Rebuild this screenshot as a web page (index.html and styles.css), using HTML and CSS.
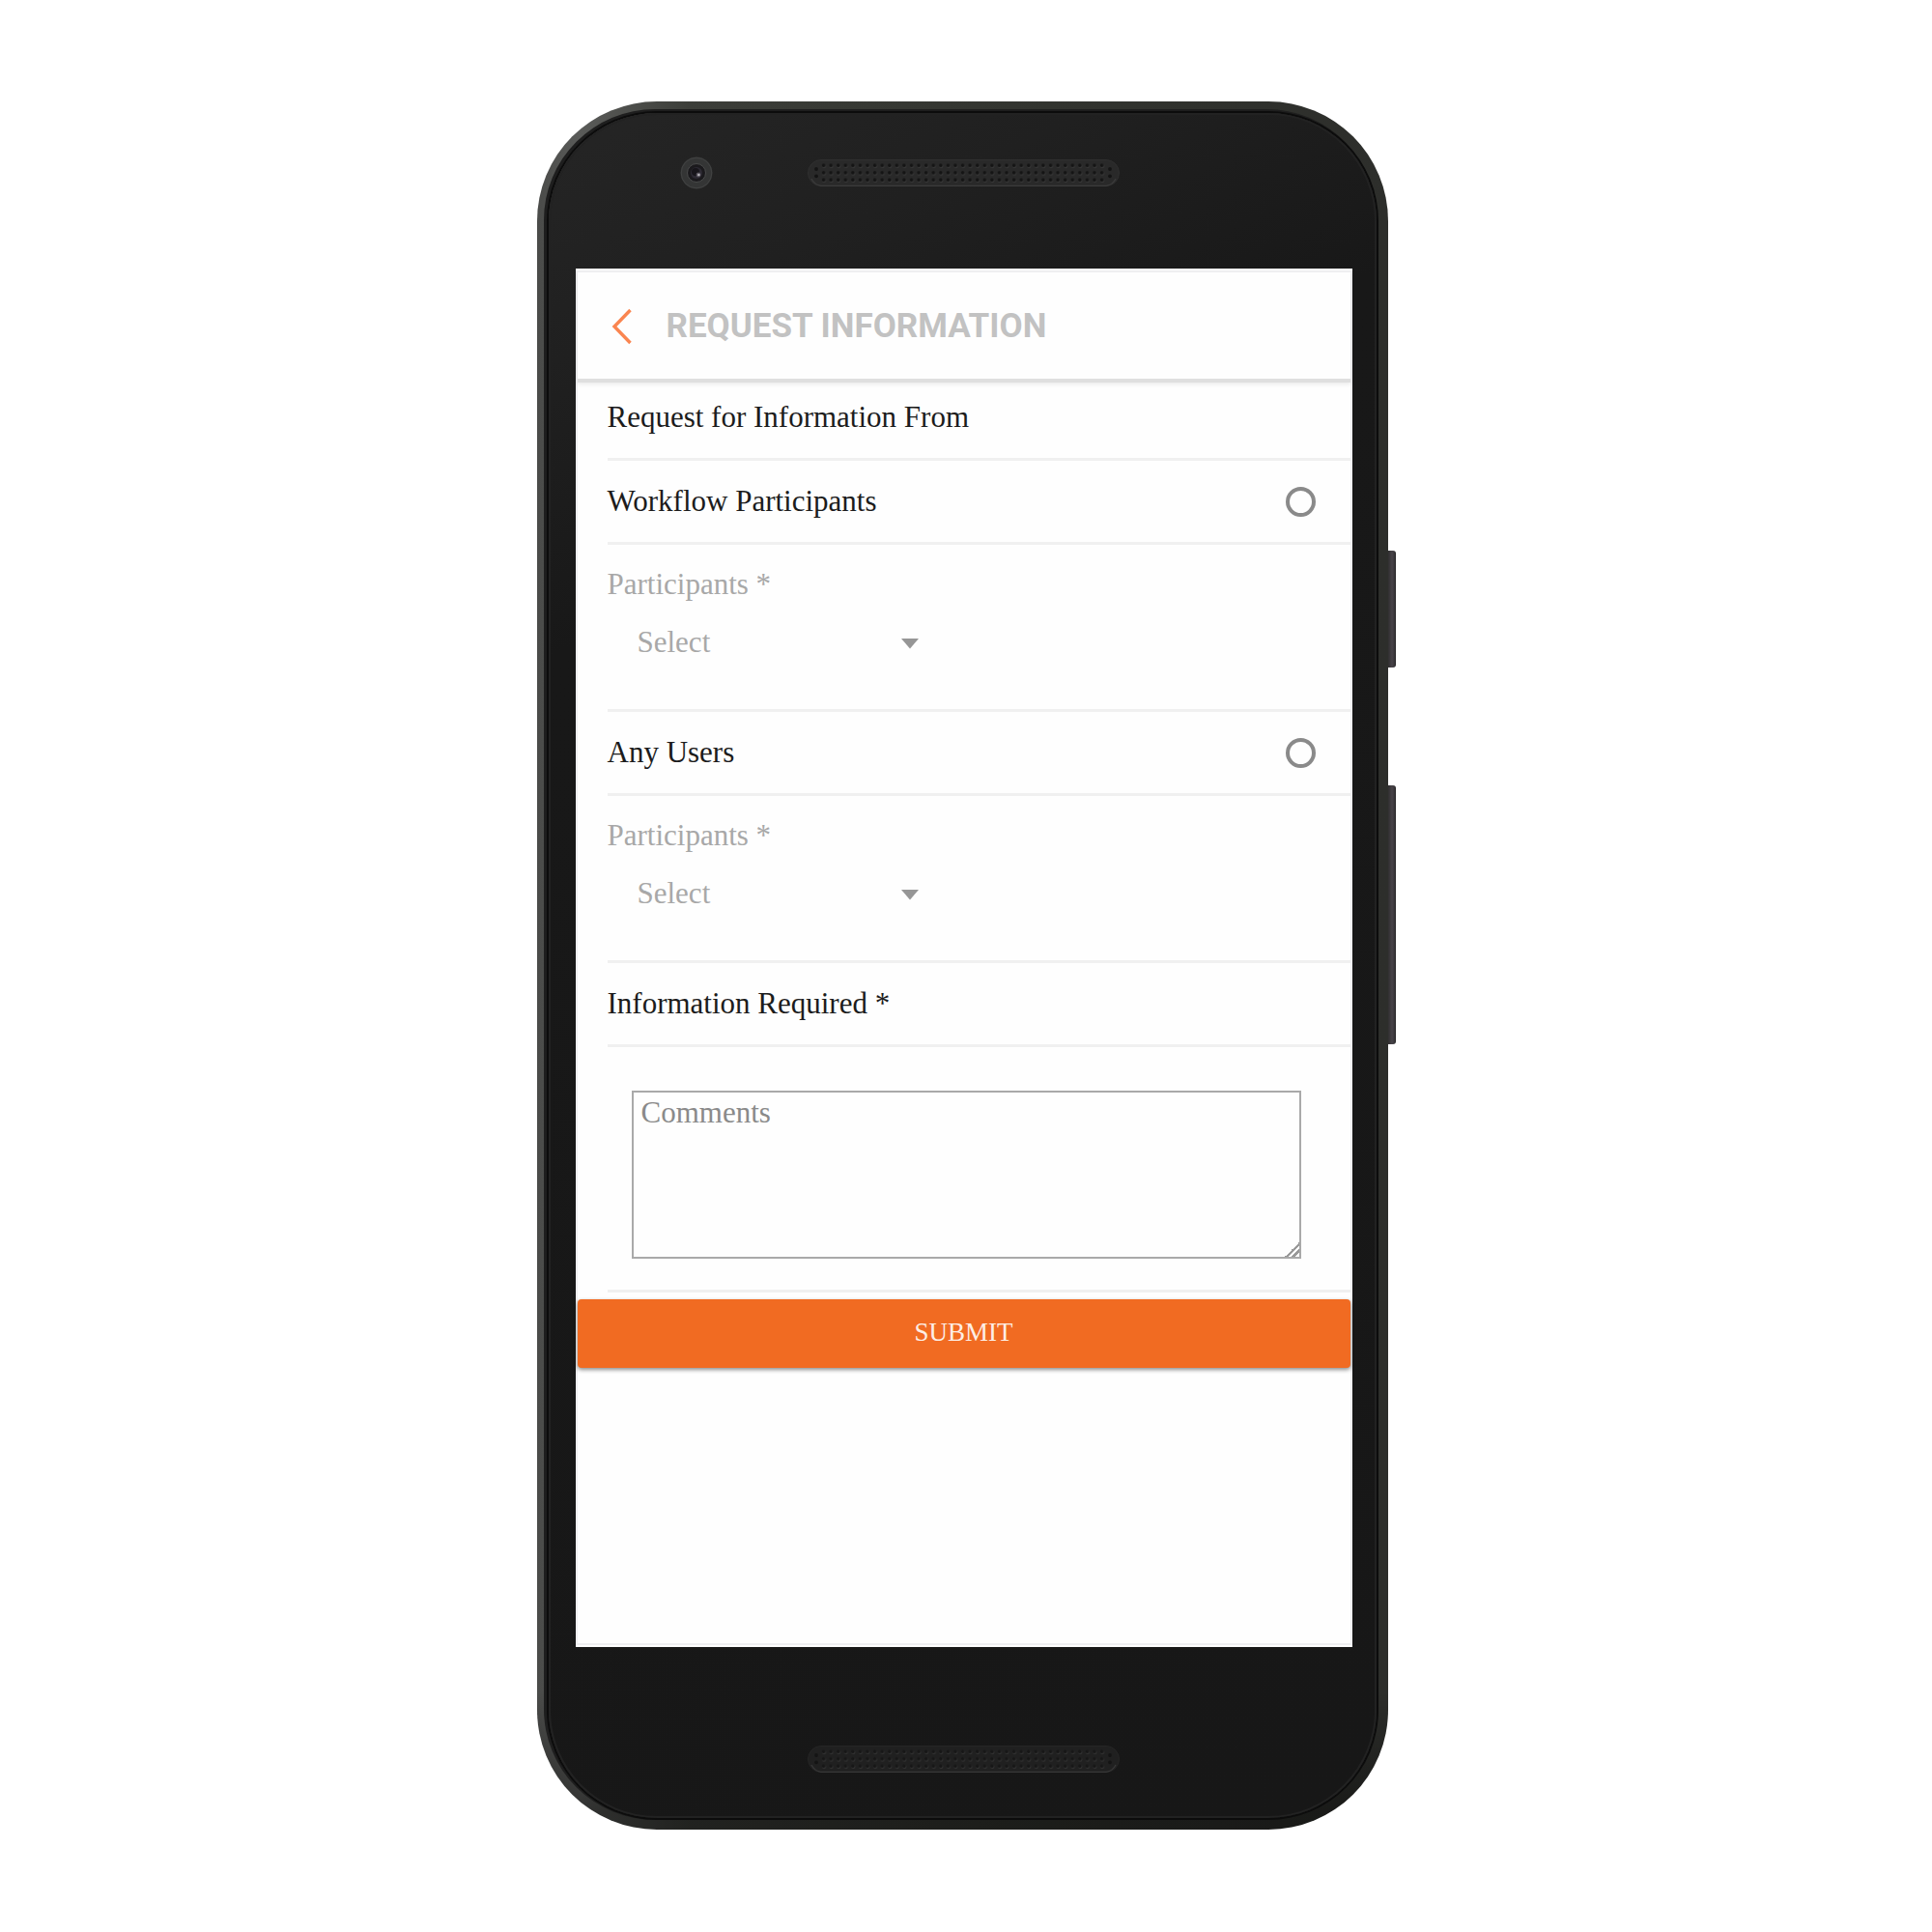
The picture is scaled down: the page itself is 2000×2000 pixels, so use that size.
FILE: index.html
```
<!DOCTYPE html>
<html lang="en">
<head>
<meta charset="utf-8">
<meta name="viewport" content="width=device-width, initial-scale=1">
<title>Request Information</title>
<link rel="stylesheet" href="styles.css">
</head>
<body>
<div class="device">
  <div class="shell">
    <div class="face">
      <div class="top-bar">
        <svg class="camera" viewBox="0 0 34 34" aria-hidden="true">
          <circle cx="17" cy="17" r="16.5" fill="#343535"/>
          <circle cx="17" cy="17" r="15.8" fill="none" stroke="#424343" stroke-width="1"/>
          <circle cx="17" cy="17" r="9.5" fill="#1b1a1d" stroke="#4a4b4b" stroke-width="1"/>
          <circle cx="17" cy="17" r="6" fill="#2d2a33"/>
          <circle cx="16" cy="16" r="4" fill="#17151a"/>
          <circle cx="19" cy="19" r="2.4" fill="#57535c"/>
          <circle cx="19.400" cy="19" r="1.200" fill="#b9b7bd"/>
        </svg>
        <svg class="speaker" viewBox="0 0 323 28" aria-hidden="true">
          <defs>
            <pattern id="holes" x="13" y="2.500" width="7.580" height="7.500" patternUnits="userSpaceOnUse">
              <circle cx="4" cy="4.400" r="2.100" fill="#3a3a3a"/>
              <circle cx="3.600" cy="3.800" r="1.900" fill="#141414"/>
            </pattern>
          </defs>
          <rect x=".5" y=".5" width="322" height="27" rx="13.500" fill="#292929" stroke="#303030"/>
          <path d="M4 20a13 13 0 0 0 10 7.300H309a13 13 0 0 0 10-7.300" fill="none" stroke="#3c3c3c" stroke-width="1.200"/>
          <rect x="13" y="2.500" width="295.600" height="22.500" fill="url(#holes)"/>
          <g fill="#141414"><circle cx="9" cy="10" r="1.900"/><circle cx="9" cy="17.300" r="1.900"/><circle cx="313" cy="10" r="1.900"/><circle cx="313" cy="17.300" r="1.900"/></g>
        </svg>
      </div>

      <main class="screen">
        <header class="app-header">
          <a class="back" href="#" aria-label="Back">
            <svg viewBox="0 0 22 38" width="22" height="38" aria-hidden="true"><path d="M19.500 2 3 19 19.500 36" fill="none" stroke="#fa8550" stroke-width="3.400"/></svg>
          </a>
          <h1 class="title">REQUEST INFORMATION</h1>
        </header>

        <form class="form">
          <h2 class="row row-first">Request for Information From</h2>
          <div class="row">
            <label for="workflow">Workflow Participants</label>
            <input class="radio" type="radio" id="workflow" name="source">
          </div>
          <div class="row picker">
            <label for="workflow-select">Participants *</label>
            <div class="select-wrap">
              <select class="select" id="workflow-select" disabled><option>Select</option></select>
              <svg class="arrow" viewBox="0 0 18 11" aria-hidden="true"><path d="M0 0H18L9 10.500Z" fill="#969696"/></svg>
            </div>
          </div>
          <div class="row">
            <label for="anyone">Any Users</label>
            <input class="radio" type="radio" id="anyone" name="source">
          </div>
          <div class="row picker">
            <label for="anyone-select">Participants *</label>
            <div class="select-wrap">
              <select class="select" id="anyone-select" disabled><option>Select</option></select>
              <svg class="arrow" viewBox="0 0 18 11" aria-hidden="true"><path d="M0 0H18L9 10.500Z" fill="#969696"/></svg>
            </div>
          </div>
          <div class="row"><label for="comments">Information Required *</label></div>
          <div class="row comments-row">
            <textarea class="comments" id="comments" placeholder="Comments"></textarea>
          </div>
          <button class="submit" type="submit">SUBMIT</button>
        </form>
      </main>

      <div class="bottom-bar">
        <svg class="speaker" viewBox="0 0 323 28" aria-hidden="true">
          <rect x=".5" y=".5" width="322" height="27" rx="13.500" fill="#202020" stroke="#262626"/>
          <path d="M4 20a13 13 0 0 0 10 7.300H309a13 13 0 0 0 10-7.300" fill="none" stroke="#383838" stroke-width="1.200"/>
          <rect x="13" y="2.500" width="295.600" height="22.500" fill="url(#holes)" opacity=".8"/>
          <g fill="#141414"><circle cx="9" cy="10" r="1.900"/><circle cx="9" cy="17.300" r="1.900"/><circle cx="313" cy="10" r="1.900"/><circle cx="313" cy="17.300" r="1.900"/></g>
        </svg>
      </div>
    </div>
  </div>
  <div class="side-keys">
    <span class="key power"></span>
    <span class="key volume"></span>
  </div>
</div>
</body>
</html>
```
FILE: styles.css
```
* {
  box-sizing: border-box;
}

body {
  margin: 0;
  padding: 105px 20px 100px;
  background: #fff;
  color: #1c1c1c;
  font: 31px/36px "Liberation Serif", "Times New Roman", serif;
}

/* Handset */
.device {
  display: flex;
  max-width: 889px;
  margin: 0 auto;
}

.shell {
  flex: 1;
  min-width: 0;
  padding: 12px;
  border-radius: 124px;
  background:
    linear-gradient(to bottom, transparent 92%, rgba(0, 0, 0, .45) 99%),
    linear-gradient(90deg, #4a4b49 0, #5a5b59 5%, #3c3e39 18%, #32342f 60%, #2d2e2b 100%);
}

.face {
  padding: 0 25px 0 28px;
  border-radius: 112px;
  background: linear-gradient(155deg, #252525 0, #202020 12%, #181818 26%, #171717 100%);
  box-shadow:
    0 0 0 2px #0c0c0c,
    -2px -1px 0 3px #1e1e1e,
    inset 0 0 0 2px #222;
}

.top-bar {
  display: grid;
  grid-template-columns: 1fr auto 1fr;
  align-items: center;
  height: 161px;
  padding-bottom: 38px;
}

.camera {
  width: 34px;
  height: 34px;
  margin-left: 108px;
}

.speaker {
  display: block;
  width: 323px;
  height: 28px;
}

.bottom-bar {
  display: flex;
  justify-content: center;
  height: 177px;
  padding-top: 102px;
}

.side-keys {
  display: flex;
  flex-direction: column;
  gap: 122px;
  width: 8px;
  padding-top: 465px;
}

.key {
  border-radius: 0 3px 3px 0;
  background: linear-gradient(90deg, #302e30, #474348 50%, #3a373b 80%, #222);
}

.power {
  height: 121px;
}

.volume {
  height: 268px;
}

/* App screen */
.screen {
  min-height: 1427px;
  padding: 0 2px;
  border: solid #fff;
  border-width: 2px 0;
  background: #fefefe;
  box-shadow: inset 0 0 0 2px #efeff1;
}

.app-header {
  display: flex;
  align-items: center;
  gap: 35px;
  height: 116px;
  padding: 3px 35px 0;
  border-bottom: 4px solid #dfdfdf;
  box-shadow: 0 2px 4px rgba(0, 0, 0, .08);
}

.back {
  display: flex;
}

.title {
  margin: 0;
  color: #c2c2c2;
  font: bold 35px/40px Roboto, sans-serif;
}

.row {
  display: flex;
  align-items: center;
  justify-content: space-between;
  min-height: 87px;
  margin: 0 0 0 31px;
  padding-right: 36px;
  border-bottom: 3px solid #f0f0f0;
  font-size: 31px;
  font-weight: normal;
}

.row-first {
  min-height: 81px;
  padding-bottom: 6px;
}

.radio {
  width: 31px;
  height: 31px;
  margin: 0;
  border: 4px solid #8a8a8a;
  border-radius: 50%;
  appearance: none;
}

.radio:checked {
  background: radial-gradient(#f16b22 50%, transparent 55%);
}

.picker {
  flex-direction: column;
  align-items: flex-start;
  justify-content: flex-start;
  gap: 24px;
  padding-top: 23px;
  padding-bottom: 51px;
  color: #a8a8a8;
}

.select-wrap {
  position: relative;
  width: 322px;
  max-width: 100%;
}

.select {
  display: block;
  width: 100%;
  height: 36px;
  padding: 0 0 0 31px;
  border: 0;
  background: transparent;
  color: #a8a8a8;
  font: inherit;
  opacity: 1;
  appearance: none;
}

.arrow {
  position: absolute;
  top: 14px;
  right: 0;
  width: 18px;
  height: 11px;
}

.comments-row {
  padding: 45px 51px 32px 25px;
}

.comments {
  display: block;
  width: 100%;
  height: 174px;
  padding: 3px 8px;
  border: 2px solid #a9a9a9;
  border-radius: 0;
  background: transparent;
  color: #1c1c1c;
  font: inherit;
  resize: vertical;
}

.comments::placeholder {
  color: #8a8a8a;
}

.comments::-webkit-resizer {
  background: linear-gradient(135deg, transparent 50%, #999 50%, #999 62%, transparent 62%, transparent 73%, #999 73%, #999 85%, transparent 85%);
}

.submit {
  display: block;
  width: 100%;
  height: 71px;
  margin-top: 7px;
  padding: 0 0 4px;
  border: 0;
  border-radius: 4px;
  background: #f16b22;
  box-shadow: 0 2px 4px rgba(0, 0, 0, .45);
  color: #fdeee6;
  font: 27px/36px "Liberation Serif", "Times New Roman", serif;
}
```
